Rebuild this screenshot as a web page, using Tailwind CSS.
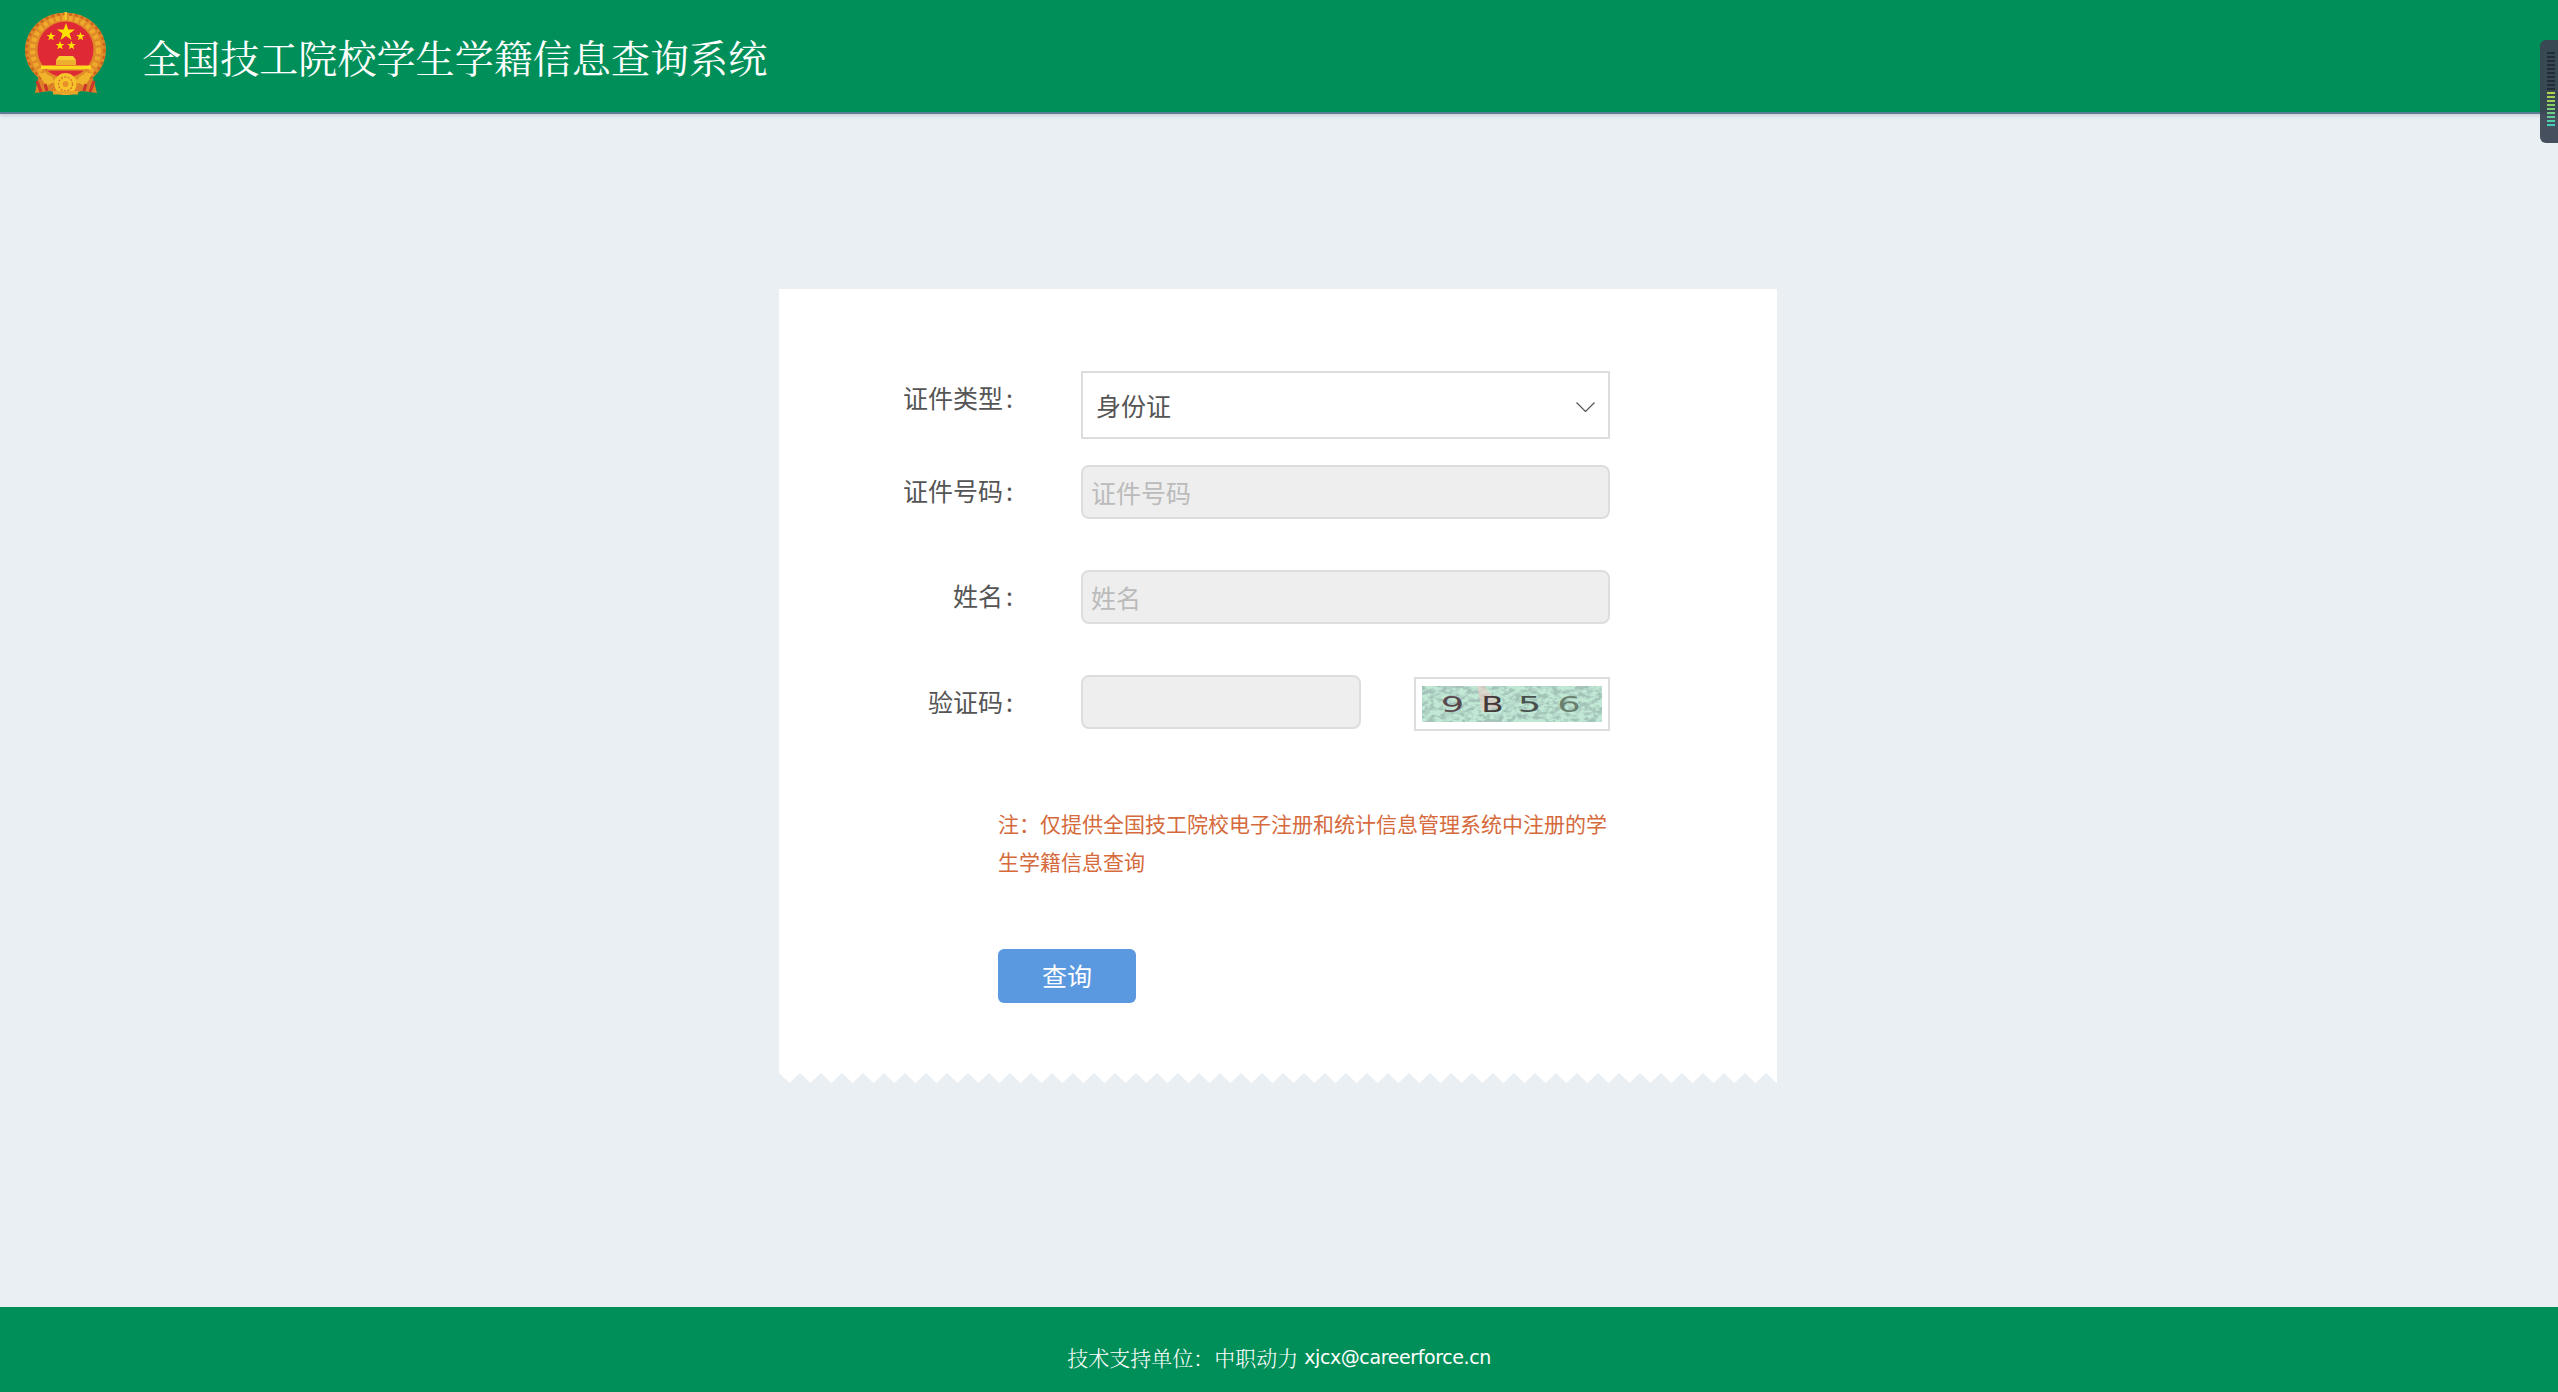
<!DOCTYPE html>
<html lang="zh-CN">
<head>
<meta charset="utf-8">
<title>全国技工院校学生学籍信息查询系统</title>
<script src="https://cdn.jsdelivr.net/npm/@tailwindcss/browser@4"></script>
</head>
<body class="m-0 bg-[#eaeff3] font-['Noto_Sans_CJK_SC',sans-serif] text-[#555]">
<div class="relative flex h-[1392px] w-full flex-col overflow-hidden">
  <header class="flex h-[114px] shrink-0 items-start border-b-2 border-[#5d7f95] bg-[#008f59] pl-[25px] shadow-[0_2px_3px_rgba(0,0,0,0.12)]">
    <svg class="mt-[12px] h-[84px] w-[81px] shrink-0" viewBox="25 12 81 84" aria-hidden="true">
      <path d="M38 78 L35 93 L50 91 L62 95 L70 95 L82 91 L97 93 L93 78 Z" fill="#dd7f28"/>
      <ellipse cx="65.500" cy="50" rx="40.500" ry="37.500" fill="#e08a28"/>
      <ellipse cx="65.500" cy="50" rx="39" ry="36" fill="none" stroke="#c9651e" stroke-width="2.500" stroke-dasharray="3 3"/>
      <ellipse cx="65.500" cy="50" rx="33" ry="32" fill="none" stroke="#efa92c" stroke-width="5" stroke-dasharray="4 2.500"/>
      <rect x="64.500" y="12" width="2.500" height="8" fill="#f3c52c"/>
      <circle cx="65.500" cy="49.500" r="28" fill="#df2a36"/>
      <polygon fill="#ffe100" points="66,23 68.200,29.500 75,29.500 69.500,33.500 71.600,40 66,36 60.400,40 62.500,33.500 57,29.500 63.800,29.500"/>
      <polygon fill="#ffe100" points="51,32 52.100,35.100 55.400,35.100 52.700,37.100 53.700,40.300 51,38.400 48.300,40.300 49.300,37.100 46.600,35.100 49.900,35.100"/>
      <polygon fill="#ffe100" points="80.500,32 81.600,35.100 84.900,35.100 82.200,37.100 83.200,40.300 80.500,38.400 77.800,40.300 78.800,37.100 76.100,35.100 79.400,35.100"/>
      <polygon fill="#ffe100" points="60,41 61.100,44.100 64.400,44.100 61.700,46.100 62.700,49.300 60,47.400 57.300,49.300 58.300,46.100 55.600,44.100 58.900,44.100"/>
      <polygon fill="#ffe100" points="71.500,41 72.600,44.100 75.900,44.100 73.200,46.100 74.200,49.300 71.500,47.400 68.800,49.300 69.800,46.100 67.100,44.100 70.400,44.100"/>
      <polygon fill="#f6cf2e" points="59,56 73,56 76,60 56,60"/>
      <rect x="56" y="60" width="20" height="5" fill="#eeb02c"/>
      <rect x="41" y="65.500" width="50" height="3.500" fill="#ffd91c"/>
      <rect x="47" y="69" width="38" height="1.500" fill="#e0a226"/>
      <path d="M38 73 Q50 72 55 82 L46 86 Z M93 73 Q81 72 76 82 L85 86 Z" fill="#f0b52b"/>
      <path d="M37 81 L41 92 M45 84 L47 91 M94 81 L90 92 M86 84 L84 91" stroke="#c9362b" stroke-width="3"/>
      <circle cx="65.500" cy="84" r="11" fill="#f6c42a"/>
      <circle cx="65.500" cy="84" r="7" fill="none" stroke="#d9772a" stroke-width="1.500" stroke-dasharray="2 1.500"/>
      <circle cx="65.500" cy="84" r="3" fill="#e8912a"/>
      <rect x="53" y="91" width="25" height="3.500" fill="#e9a429"/>
    </svg>
    <h1 class="ml-[36px] mt-[32px] whitespace-nowrap font-['SimSun','Noto_Serif_CJK_SC','Noto_Sans_CJK_SC',serif] text-[39.100px] leading-[48px] font-normal text-white">全国技工院校学生学籍信息查询系统</h1>
  </header>

  <main class="flex-1">
    <section class="mt-[175px] ml-[779px] w-[998px]">
      <form class="bg-white pt-[82px] pb-[70px]">
        <div class="flex h-[68px] items-center gap-[67px]">
          <label class="w-[235px] pb-[14px] pr-px text-right text-[25px]">证件类型<span class="ml-[3px]">:</span></label>
          <div class="relative w-[529px]">
            <select class="h-[68px] w-full appearance-none rounded-none border-2 border-[#ddd] bg-white pt-[2px] pl-[13px] text-[25px] text-[#555] outline-none">
              <option>身份证</option>
            </select>
            <svg class="absolute top-[31px] right-[15px] h-[10px] w-[19px]" viewBox="0 0 19 10" fill="none" stroke="#555" stroke-width="1.200" aria-hidden="true"><path d="M0.500 0.500 L9.500 9.500 L18.500 0.500"/></svg>
          </div>
        </div>
        <div class="mt-[26px] flex h-[54px] items-center gap-[67px]">
          <label class="w-[235px] pb-[2px] pr-px text-right text-[25px]">证件号码<span class="ml-[3px]">:</span></label>
          <input placeholder="证件号码" class="h-[54px] w-[529px] rounded-lg border-2 border-[#ddd] bg-[#eee] px-[8px] text-[25px] outline-none placeholder:text-[#bbb]">
        </div>
        <div class="mt-[51px] flex h-[54px] items-center gap-[67px]">
          <label class="w-[235px] pb-[2px] pr-px text-right text-[25px]">姓名<span class="ml-[3px]">:</span></label>
          <input placeholder="姓名" class="h-[54px] w-[529px] rounded-lg border-2 border-[#ddd] bg-[#eee] px-[8px] text-[25px] outline-none placeholder:text-[#bbb]">
        </div>
        <div class="mt-[51px] flex h-[56px] items-start gap-[67px]">
          <label class="w-[235px] pt-[8px] pr-px text-right text-[25px]">验证码<span class="ml-[3px]">:</span></label>
          <input class="h-[54px] w-[280px] rounded-lg border-2 border-[#ddd] bg-[#eee] px-[8px] text-[24px] outline-none">
          <div class="-ml-[14px] mt-[2px] flex h-[54px] w-[196px] items-center justify-center border-2 border-[#ddd] bg-white">
            <svg class="block h-[36px] w-[180px]" viewBox="0 0 180 36" aria-label="验证码图片">
              <defs>
                <filter id="noise" x="0" y="0" width="100%" height="100%" color-interpolation-filters="sRGB">
                  <feTurbulence type="fractalNoise" baseFrequency="0.16 0.24" numOctaves="4" seed="11"/>
                  <feColorMatrix type="matrix" values="0 0 0 0 0.64  0 0 0 0 0.76  0 0 0 0 0.72  3.500 0 0 0 -1.350"/>
                </filter>
              </defs>
              <rect width="180" height="36" fill="#c2e9d6"/>
              <rect width="180" height="36" filter="url(#noise)"/>
              <polygon points="55,0 62,0 78,20 60,26" fill="#f0c8c4" opacity="0.55"/>
              <g font-family="'DejaVu Sans',sans-serif" font-size="20.500" text-anchor="middle">
                <text transform="translate(30.500 26) scale(1.8 1)" fill="#5a4a50">9</text>
                <text transform="translate(70.500 26) scale(1.6 1)" fill="#453838">B</text>
                <text transform="translate(107.500 26) scale(1.8 1)" fill="#47504c">5</text>
                <text transform="translate(147 26) scale(1.8 1)" fill="#69806e">6</text>
              </g>
            </svg>
          </div>
        </div>
        <p class="mt-[73px] ml-[219px] w-[620px] text-[21px] leading-[38px] text-[#d56a3c]">注：仅提供全国技工院校电子注册和统计信息管理系统中注册的学生学籍信息查询</p>
        <button type="button" class="mt-[69px] ml-[219px] block h-[54px] w-[138px] rounded-md bg-[#5a98df] text-[25px] text-white">查询</button>
      </form>
      <svg class="block h-[10px] w-[998px]" viewBox="0 0 998 10" aria-hidden="true">
        <defs><pattern id="zig" width="21" height="10" patternUnits="userSpaceOnUse"><polygon points="0,0 21,0 10.500,10" fill="#fff"/></pattern></defs>
        <rect width="998" height="10" fill="url(#zig)"/>
      </svg>
    </section>
  </main>

  <footer class="flex h-[85px] shrink-0 items-start justify-center bg-[#008f59] pt-[36px] text-[21px] leading-[28px] text-white">
    <span class="font-['SimSun','Noto_Serif_CJK_SC','Noto_Sans_CJK_SC',sans-serif] font-light">技术支持单位：中职动力</span>
    <span class="ml-[6px] font-['DejaVu_Sans',sans-serif] text-[19px] tracking-[-0.4px]">xjcx@careerforce.cn</span>
  </footer>

  <aside class="absolute top-[40px] right-0 flex h-[103px] w-[18px] flex-col gap-[1.800px] rounded-l-md bg-[#3c4654]/95 py-[12px] pl-[7px]" aria-hidden="true">
    <i class="block h-[2.200px] w-[8px] bg-[#222c38]"></i><i class="block h-[2.200px] w-[8px] bg-[#222c38]"></i><i class="block h-[2.200px] w-[8px] bg-[#222c38]"></i><i class="block h-[2.200px] w-[8px] bg-[#222c38]"></i><i class="block h-[2.200px] w-[8px] bg-[#222c38]"></i><i class="block h-[2.200px] w-[8px] bg-[#222c38]"></i><i class="block h-[2.200px] w-[8px] bg-[#222c38]"></i><i class="block h-[2.200px] w-[8px] bg-[#222c38]"></i><i class="block h-[2.200px] w-[8px] bg-[#222c38]"></i><i class="block h-[2.200px] w-[8px] bg-[#222c38]"></i>
    <i class="block h-[2.200px] w-[8px] bg-[#b3d34d]"></i><i class="block h-[2.200px] w-[8px] bg-[#a8d254]"></i><i class="block h-[2.200px] w-[8px] bg-[#9dd05c]"></i><i class="block h-[2.200px] w-[8px] bg-[#8ecf68]"></i><i class="block h-[2.200px] w-[8px] bg-[#80cf78]"></i><i class="block h-[2.200px] w-[8px] bg-[#72cf88]"></i><i class="block h-[2.200px] w-[8px] bg-[#62ce98]"></i><i class="block h-[2.200px] w-[8px] bg-[#52cea8]"></i><i class="block h-[2.200px] w-[8px] bg-[#45ceb5]"></i>
  </aside>
</div>
</body>
</html>
